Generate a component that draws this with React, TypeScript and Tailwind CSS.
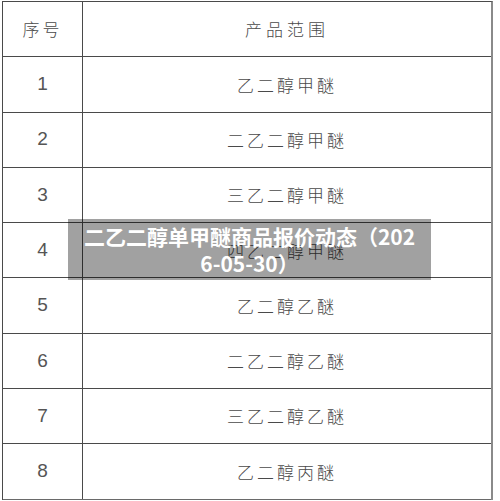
import React from "react";

const rows = [
  { no: "1", name: "乙二醇甲醚" },
  { no: "2", name: "二乙二醇甲醚" },
  { no: "3", name: "三乙二醇甲醚" },
  { no: "4", name: "四乙二醇甲醚" },
  { no: "5", name: "乙二醇乙醚" },
  { no: "6", name: "二乙二醇乙醚" },
  { no: "7", name: "三乙二醇乙醚" },
  { no: "8", name: "乙二醇丙醚" },
];

const cjk = { fontFamily: '"Noto Sans CJK SC", "Noto Sans", sans-serif' };
const num = { fontFamily: '"Liberation Sans", Arial, sans-serif' };

const App = () => {
  return (
    <div className="relative w-[500px] h-[501px] bg-white overflow-hidden">
      <div className="pl-[2px] pt-[1px]">
        <div className="w-[491px] border-l border-t border-[#4a4a4a] border-r-2 border-r-[#8a8a8a]">
          <div className="grid grid-cols-[80px_1fr] h-[55.3px] border-b border-[#4a4a4a]">
            <div
              className="flex items-center justify-center border-r border-[#4a4a4a] text-[17px] tracking-[3px] text-[#4a4a4a] font-light"
              style={cjk}
            >
              序号
            </div>
            <div
              className="flex items-center justify-center text-[17px] tracking-[4px] text-[#4a4a4a] font-light"
              style={cjk}
            >
              产品范围
            </div>
          </div>
          {rows.map((row, i) => (
            <div
              key={row.no}
              className={`grid grid-cols-[80px_1fr] h-[55.3px] border-b ${
                i === rows.length - 1 ? "border-[#6a6a6a]" : "border-[#4a4a4a]"
              }`}
            >
              <div
                className="flex items-center justify-center border-r border-[#4a4a4a] text-[19px] text-[#555]"
                style={num}
              >
                {row.no}
              </div>
              <div
                className="flex items-center justify-center text-[17px] tracking-[3px] text-[#4a4a4a] font-light"
                style={cjk}
              >
                {row.name}
              </div>
            </div>
          ))}
        </div>
      </div>

      <div className="absolute left-[68px] top-[219px] w-[363px] h-[61px] bg-black/[0.37] px-[11px] flex items-center justify-center">
        <p
          className="text-white font-bold text-[21px] leading-[27px] text-center break-all"
          style={cjk}
        >
          二乙二醇单甲醚商品报价动态（2026-05-30）
        </p>
      </div>
    </div>
  );
};

export default App;
